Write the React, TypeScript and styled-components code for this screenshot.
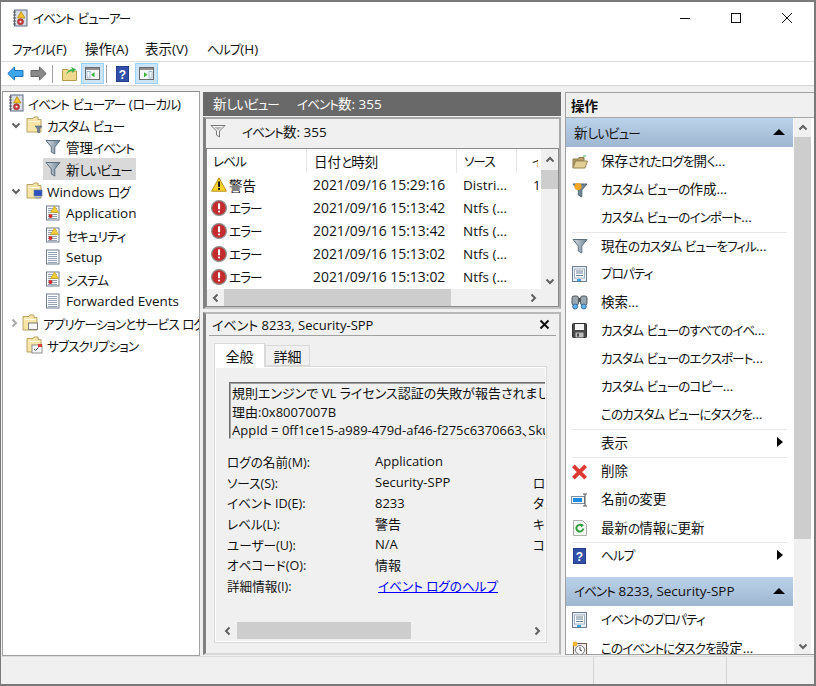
import React from "react";
import styled, { createGlobalStyle } from "styled-components";

const FONT = `"Open Sans", "Noto Sans CJK JP", sans-serif`;

const Global = createGlobalStyle`
  html, body { margin: 0; padding: 0; background: #fff; }
  * { box-sizing: border-box; }
  #root { width: 816px; height: 686px; overflow: hidden; }
`;

const Win = styled.div`
  width: 816px; height: 686px; display: flex; flex-direction: column;
  border: 2px solid #7a7a7a; border-width: 2px 2px 2px 1px;
  background: #fff; font-family: ${FONT}; font-size: 13.5px; color: #111; overflow: hidden;
  font-feature-settings: "palt";
`;
const Kana = styled.span`
  font-size: 12.6px; letter-spacing: -0.95px;
`;
const TitleBar = styled.div`
  height: 34px; display: flex; align-items: center; padding: 0 0 2px 11px; gap: 5px; flex: none;
`;
const TitleText = styled.span` font-size: 14px; flex: 1; white-space: nowrap; margin-top: -2px; `;
const WinBtn = styled.div`
  width: 46px; height: 32px; display: flex; align-items: center; justify-content: center;
  &:last-child { margin-right: 4px; }
`;
const MenuBar = styled.div`
  height: 25px; display: flex; align-items: center; padding: 0 0 1px 11px; flex: none; font-size: 13.5px;
`;
const MenuItem = styled.span<{ $w: number }>`
  width: ${p => p.$w}px; flex: none; white-space: nowrap;
`;
const Toolbar = styled.div`
  height: 24px; flex: none; border-top: 1px solid #dcdcdc; display: flex; align-items: center; padding-left: 6px;
`;
const ToolBtn = styled.div<{ $w?: number; $on?: boolean }>`
  width: ${p => p.$w ?? 23}px; height: 21px; display: flex; align-items: center; justify-content: center;
  background: ${p => (p.$on ? "#cce4f7" : "transparent")};
  border: 1px solid ${p => (p.$on ? "#99d1ff" : "transparent")};
`;
const ToolSep = styled.div<{ $mx: number }>`
  width: 1px; height: 18px; background: #a0a0a0; margin: 0 ${p => p.$mx}px;
`;
const Body = styled.div`
  flex: 1; min-height: 0; display: flex; background: #f0f0f0; border-top: 1px solid #d4d4d4; padding-top: 5px;
`;
const TreePane = styled.div`
  width: 198px; flex: none; background: #fff; border: 1px solid #a0a0a0; margin-left: 1px;
  border-top-color: #8f8f8f; overflow: hidden; white-space: nowrap;
`;
const TreeRow = styled.div<{ $lvl: number }>`
  height: 22px; display: flex; align-items: center;
  padding-left: ${p => [5, 23, 42][p.$lvl]}px;
  font-size: 13.5px;
`;
const Chevron = styled.span`
  width: 14px; margin-left: -17px; margin-right: 3px; display: flex; justify-content: center;
`;
const TreeLabel = styled.span<{ $sel?: boolean; $gap?: number }>`
  display: flex; align-items: center; height: 22px; gap: ${p => p.$gap ?? 5}px;
  background: ${p => (p.$sel ? "#d9d9d9" : "transparent")};
  padding: 0 ${p => (p.$sel ? 4 : 0)}px 0 ${p => (p.$sel ? 2 : 0)}px;
  margin-left: ${p => (p.$sel ? -2 : 0)}px;
`;
const LabelText = styled.span` white-space: nowrap; `;
const Center = styled.div`
  width: 358px; flex: none; margin-left: 3px; display: flex; flex-direction: column; padding-top: 1px;
`;
const DarkHead = styled.div`
  height: 24px; flex: none; background: #696969; color: #fff; display: flex; align-items: center;
  padding: 0 0 2px 10px; font-size: 13.5px;
`;
const DarkTitle = styled.span` width: 84px; flex: none; white-space: nowrap; `;
const ListPanel = styled.div`
  height: 192px; flex: none; margin-top: 1px; border-style: solid; border-width: 2px 2px 2px 3px;
  border-color: #a8a8a8 #a8a8a8 #c4c4c4 #808080;
  display: flex; flex-direction: column; background: #f0f0f0;
`;
const InfoBar = styled.div`
  height: 29px; flex: none; display: flex; align-items: center; padding: 0 0 5px 4px; gap: 16px; font-size: 13.5px;
`;
const ListBox = styled.div`
  flex: 1; min-height: 0; background: #fff; border: 1px solid #8a8a8a;
  display: grid; grid-template-columns: 1fr 17px; grid-template-rows: 1fr 17px;
`;
const ListMain = styled.div` overflow: hidden; min-width: 0; `;
const Head = styled.div`
  height: 24px; display: flex; white-space: nowrap;
`;
const HeadCell = styled.div<{ $w: number; $pad?: number }>`
  width: ${p => p.$w}px; flex: none; padding: 0 0 1px ${p => p.$pad ?? 6}px; display: flex; align-items: center;
  border-right: 1px solid #e5e5e5; overflow: hidden; font-size: 13.5px;
  &:last-child { border-right: 0; }
`;
const Row = styled.div`
  height: 23px; display: flex; align-items: center; white-space: nowrap; font-size: 13.5px;
`;
const Cell = styled.div<{ $w: number; $pad?: number; $fs?: number }>`
  width: ${p => p.$w}px; flex: none; padding-left: ${p => p.$pad ?? 7}px; display: flex; align-items: center; gap: 2px; overflow: hidden;
  font-size: ${p => p.$fs ?? 13.5}px;
`;
const VBar = styled.div`
  width: 17px; background: #f0f0f0; display: flex; flex-direction: column; align-items: stretch; flex: none;
`;
const HBar = styled.div`
  height: 17px; background: #f0f0f0; display: flex; align-items: stretch;
`;
const ArrowBox = styled.div<{ $s?: number; $h?: number }>`
  flex: none; width: ${p => p.$s ?? 17}px; height: ${p => (p.$h ? `${p.$h}px` : "auto")}; min-height: 17px; display: flex; align-items: center; justify-content: center;
`;
const VThumb = styled.div<{ $h: number }>`
  height: ${p => p.$h}px; background: #cdcdcd; flex: none;
`;
const HThumb = styled.div<{ $w: number }>`
  width: ${p => p.$w}px; background: #cdcdcd; flex: none;
`;
const Spacer = styled.div` flex: 1; `;
const Corner = styled.div` background: #f0f0f0; `;
const DetailPanel = styled.div`
  flex: 1; min-height: 0; margin-top: 3px; border-style: solid; border-width: 2px 2px 2px 3px; padding: 0 3px;
  display: flex; flex-direction: column; border-color: #b8b8b8 #b8b8b8 #d8d8d8 #808080; overflow: hidden; margin-bottom: 1px;
`;
const DetailHead = styled.div`
  height: 22px; flex: none; display: flex; align-items: center; border-bottom: 1px solid #a0a0a0; font-size: 13px; justify-content: space-between; padding: 0 6px 0 3px;
`;
const Tabs = styled.div`
  flex: none; height: 30px; padding: 7px 0 0 5px; display: flex; align-items: flex-end;
`;
const Tab = styled.div<{ $on?: boolean }>`
  width: ${p => (p.$on ? 51 : 45)}px; height: ${p => (p.$on ? 24 : 21)}px; display: flex; align-items: center; justify-content: center;
  background: ${p => (p.$on ? "#fff" : "#f0f0f0")}; font-size: 14px;
  border: 1px solid #d9d9d9; ${p => (p.$on ? "border-bottom:0;" : "")}
  margin-bottom: ${p => (p.$on ? -1 : 0)}px; position: relative; z-index: 1;
`;
const TabBody = styled.div`
  width: 333px; height: 277px; flex: none; margin-left: 5px; background: #f0f0f0;
  border: 1px solid #d9d9d9; box-shadow: inset 0 0 0 1px #fff; padding: 15px 1px 3px 14px; display: flex; flex-direction: column;
`;
const MsgBox = styled.div`
  height: 57px; flex: none; border: 1px solid #fff; border-top-color: #6e6e6e; border-left-color: #6e6e6e; border-bottom-color: #e3e3e3; border-right: 0;
  box-shadow: inset 1px 1px 0 #a0a0a0; padding: 1px 0 0 2px; font-size: 13px; line-height: 18.5px; white-space: nowrap; overflow: hidden;
`;
const Fields = styled.div`
  flex: 1; min-height: 0; padding-top: 12px; margin-left: -2px; overflow: hidden; font-size: 12.6px;
`;
const Field = styled.div`
  height: 20.7px; display: flex; align-items: center; white-space: nowrap;
`;
const FLabel = styled.span` width: 148px; flex: none; `;
const FValue = styled.span` width: 158px; flex: none; font-size: 13px; `;
const FThird = styled.span` flex: none; width: 13px; overflow: hidden; `;
const HelpLink = styled.a`
  color: #0000ff; text-decoration: underline; margin-left: 3px;
`;
const DetailH = styled(HBar)` margin: 0 0 0 -11px; flex: none; width: 327px; `;
const Right = styled.div`
  width: 249px; flex: none; margin-left: 4px; border: 1px solid #a0a0a0; border-width: 1px 0 1px 1px; display: flex; flex-direction: column;
  background: #fff; margin-top: 1px; margin-bottom: 1px; overflow: hidden;
`;
const ActionsHead = styled.div`
  height: 25px; flex: none; background: #f0f0f0; border-bottom: 1px solid #a8a8a8; display: flex; align-items: center; padding: 0 0 1px 5px; font-weight: 700; font-size: 13.5px;
`;
const ActionsWrap = styled.div` flex: 1; min-height: 0; display: flex; gap: 1px; `;
const ActionList = styled.div` width: 227px; flex: none; overflow: hidden; `;
const SectionHead = styled.div<{ $gapTop?: boolean }>`
  height: 29px; display: flex; align-items: center; justify-content: space-between; padding: 0 8px 1px 8px;
  margin-top: ${p => (p.$gapTop ? 7 : 0)}px;
  background: linear-gradient(#bbd2ea, #9fb6d1); font-size: 13.5px; white-space: nowrap;
`;
const ActionRow = styled.div<{ $sep?: boolean }>`
  height: 28.2px; display: flex; align-items: center; position: relative; white-space: nowrap; font-size: 13.5px; padding: 0 0 2px 35px;
  ${p => p.$sep ? `&::before { content: ""; position: absolute; left: 6px; right: 6px; top: 0; height: 1px; background: #e8e8e8; }` : ""}
`;
const ActionIcon = styled.span`
  position: absolute; left: 5px; top: 6px; width: 17px; height: 17px; display: flex; align-items: center; justify-content: center;
`;
const SubArrow = styled.span`
  position: absolute; right: 10px; top: 8px; width: 0; height: 0; border-left: 6px solid #000; border-top: 5.5px solid transparent; border-bottom: 5.5px solid transparent;
`;
const Tri = styled.span`
  width: 0; height: 0; border-bottom: 6px solid #000; border-left: 6px solid transparent; border-right: 6px solid transparent;
`;
const StatusBar = styled.div`
  height: 28px; flex: none; background: #f0f0f0; border-top: 1px solid #dcdcdc; display: flex;
`;
const StatusCell = styled.div<{ $w: number }>`
  width: ${p => p.$w}px; flex: none; border-right: 1px solid #d4d4d4;
`;

/* Splits a label so that its kana runs get the narrow setting the UI font of the reference has. */
const T = ({ children }: { children: string }) => (
  <LabelText>
    {children.split(/([\u3040-\u30ff]+)/).map((part, i) =>
      i % 2 ? <Kana key={i}>{part}</Kana> : part
    )}
  </LabelText>
);

const Chev = ({ d, c = "#606060" }: { d: "u" | "d" | "l" | "r"; c?: string }) => {
  const p = { u: "M1.5 6.5 L5 3 L8.5 6.5", d: "M1.5 3.5 L5 7 L8.5 3.5", l: "M6.5 1.5 L3 5 L6.5 8.5", r: "M3.5 1.5 L7 5 L3.5 8.5" }[d];
  return <svg width="10" height="10" viewBox="0 0 10 10"><path d={p} fill="none" stroke={c} strokeWidth="2" /></svg>;
};
const Filter = ({ s = 16 }: { s?: number }) => (
  <svg width={s} height={s} viewBox="0 0 16 16">
    <defs><linearGradient id="fg" x1="0" y1="0" x2="1" y2="0"><stop offset="0" stopColor="#d5dee5" /><stop offset="1" stopColor="#6f8494" /></linearGradient></defs>
    <path d="M1 1.5 H15 L9.8 8 V15 L6.3 13 V8 Z" fill="url(#fg)" stroke="#5b7080" strokeWidth="1" />
  </svg>
);
const FilterOutline = () => (
  <svg width="16" height="14" viewBox="0 0 16 14"><path d="M1 1.5 H15 L9.5 7 V13 L6.5 11 V7 Z" fill="#f4f4f4" stroke="#777" /><path d="M4 3 H12 L8 6.5Z" fill="#bbb" /></svg>
);
const FilterOrange = () => (
  <svg width="16" height="16" viewBox="0 0 16 16"><path d="M1 2 H15 L9.8 8 V15 L6.3 13 V8 Z" fill="#6f8494" stroke="#4f6474" /><circle cx="6" cy="4.5" r="3.6" fill="#f5a623" /></svg>
);
const BookIcon = () => (
  <svg width="16" height="18" viewBox="0 0 16 18">
    <rect x="2.5" y="1" width="12.5" height="16" fill="#d8dde6" stroke="#5f6c80" />
    <path d="M1 3h3M1 6h3M1 9h3M1 12h3M1 15h3" stroke="#555" strokeWidth="1.2" />
    <path d="M9 2.5 L13 9 H5.5 Z" fill="#f2c230" stroke="#a67c00" strokeWidth=".6" />
    <circle cx="8.5" cy="12.8" r="3" fill="#cf3b3b" stroke="#8c2020" strokeWidth=".6" /><circle cx="8.5" cy="12.8" r="1" fill="#fff" />
  </svg>
);
const Folder = ({ children }: { children?: React.ReactNode }) => (
  <svg width="17" height="18" viewBox="0 0 17 18">
    <path d="M1 2.5 H7 L8 1 H12 V3.5 H15 V16 H1 Z" fill="#f6e6a8" stroke="#b8a365" />
    <rect x="2.5" y="5" width="11" height="1" fill="#fff" opacity=".7" />
    {children}
  </svg>
);
const LogIcon = ({ warn }: { warn?: boolean }) => (
  <svg width="15" height="16" viewBox="0 0 15 16">
    <rect x="1.5" y="1" width="12.5" height="14" fill="#fbfcfd" stroke="#6f7d8f" />
    <path d="M3 3.5h9M3 5.5h9M3 7.5h9M3 9.5h9M3 11.5h9M3 13.5h9" stroke="#93a1b3" />
    {warn && <><path d="M9.5 1 L13.5 7.5 H5.5 Z" fill="#f5cf3a" stroke="#b58f00" strokeWidth=".5" /><circle cx="5.5" cy="11" r="2" fill="#d02c2c" /></>}
  </svg>
);
const Warn = () => (
  <svg width="16" height="15" viewBox="0 0 16 15"><path d="M8 .8 L15.4 14.2 H.6 Z" fill="#f7d330" stroke="#b78f10" strokeLinejoin="round" /><rect x="7.1" y="4.5" width="1.9" height="5.5" fill="#111" /><rect x="7.1" y="11" width="1.9" height="1.9" fill="#111" /></svg>
);
const Err = () => (
  <svg width="16" height="16" viewBox="0 0 16 16"><circle cx="8" cy="8" r="7.4" fill="#c42b2f" stroke="#8f8f8f" strokeWidth="1.2" /><rect x="7" y="3.3" width="2.1" height="6" rx=".6" fill="#fff" /><rect x="7" y="10.4" width="2.1" height="2.1" rx=".9" fill="#fff" /></svg>
);
const PropIcon = () => (
  <svg width="15" height="16" viewBox="0 0 15 16"><rect x=".5" y=".5" width="14" height="15" fill="#e8eef5" stroke="#6f7d8f" /><rect x="2.5" y="3" width="10" height="9" fill="#fff" stroke="#a3afbd" /><path d="M4 5h7M4 7h7M4 9.5h7" stroke="#6b7f95" /><rect x="5" y="13" width="4" height="2" fill="#3ba3ee" /></svg>
);
const PaneIcon = ({ right }: { right?: boolean }) => (
  <svg width="15" height="13" viewBox="0 0 15 13">
    <rect x=".5" y=".5" width="14" height="12" fill="#f4f6f8" stroke="#6a6a6a" /><rect x="1" y="1" width="13" height="2" fill="#8f8f8f" />
    <rect x={right ? 10 : 2} y="4.5" width="3" height="6.5" fill="#fff" stroke="#7fa3c6" strokeWidth=".7" />
    <path d={right ? "M5 5.2 L8.5 7.7 L5 10.2Z" : "M9.5 5.2 L6 7.7 L9.5 10.2Z"} fill="#35b335" />
  </svg>
);
const Help = ({ w = 13 }: { w?: number }) => (
  <svg width={w} height={w + 3} viewBox="0 0 13 16"><rect width="13" height="16" fill="#2f4fa8" /><rect width="13" height="16" fill="none" stroke="#1b2f73" /><text x="6.5" y="12.5" fontSize="12" fontWeight="700" fontFamily="Liberation Sans, sans-serif" textAnchor="middle" fill="#fff">?</text></svg>
);
const ArrowIcon = ({ left, c1, c2 }: { left?: boolean; c1: string; c2: string }) => (
  <svg width="17" height="15" viewBox="0 0 17 15">
    <path d={left ? "M.8 7.5 L7.5 1 V4.5 H16 V10.5 H7.5 V14 Z" : "M16.2 7.5 L9.5 1 V4.5 H1 V10.5 H9.5 V14 Z"} fill={c1} stroke={c2} strokeLinejoin="round" />
  </svg>
);
const X = () => (
  <svg width="18" height="18" viewBox="0 0 18 18"><path d="M2.5 2.5 L15.5 15.5 M15.5 2.5 L2.5 15.5" stroke="#dc3a30" strokeWidth="4" /></svg>
);

const rows: [boolean, string, string][] = [
  [true, "2021/09/16 15:29:16", "Distri..."],
  [false, "2021/09/16 15:13:42", "Ntfs (..."],
  [false, "2021/09/16 15:13:42", "Ntfs (..."],
  [false, "2021/09/16 15:13:02", "Ntfs (..."],
  [false, "2021/09/16 15:13:02", "Ntfs (..."],
];

const fields: [string, string, string][] = [
  ["ログの名前(M):", "Application", ""],
  ["ソース(S):", "Security-SPP", "ログ"],
  ["イベント ID(E):", "8233", "タスク"],
  ["レベル(L):", "警告", "キーワード"],
  ["ユーザー(U):", "N/A", "コンピューター"],
  ["オペコード(O):", "情報", ""],
];

const actions1: { t: string; i?: React.ReactNode; sep?: boolean; sub?: boolean }[] = [
  { t: "保存されたログを開く...", i: <svg width="16" height="14" viewBox="0 0 16 14"><path d="M1 4 H6 L7 2.5 H12 V6 H3.5 L1 12.5 Z" fill="#b8a06a" stroke="#8a7748" /><path d="M1 13 L3.6 6 H15.5 L13 13 Z" fill="#e2cf96" stroke="#9a8650" /><path d="M11 1h3" stroke="#3db54a" /></svg> },
  { t: "カスタム ビューの作成...", i: <FilterOrange /> },
  { t: "カスタム ビューのインポート..." },
  { t: "現在のカスタム ビューをフィル...", i: <Filter />, sep: true },
  { t: "プロパティ", i: <PropIcon /> },
  { t: "検索...", i: <svg width="17" height="16" viewBox="0 0 17 16"><rect x="1" y="2" width="6.5" height="9" rx="2" fill="#9aa5ad" stroke="#4f5860" /><rect x="9.5" y="2" width="6.5" height="9" rx="2" fill="#9aa5ad" stroke="#4f5860" /><rect x="7" y="4" width="3" height="4" fill="#4f5860" /><circle cx="4.2" cy="12.5" r="2.5" fill="#5fb2ec" stroke="#3b6d94" /><circle cx="12.8" cy="12.5" r="2.5" fill="#5fb2ec" stroke="#3b6d94" /></svg> },
  { t: "カスタム ビューのすべてのイベ...", i: <svg width="15" height="15" viewBox="0 0 15 15"><rect x=".5" y=".5" width="14" height="14" rx="1" fill="#4a4a4a" stroke="#2f2f2f" /><rect x="3" y="1" width="9" height="6" fill="#f4f4f4" /><rect x="3.5" y="9.5" width="8" height="5" fill="#bdbdbd" /><rect x="5" y="10.5" width="2" height="3" fill="#4a4a4a" /></svg> },
  { t: "カスタム ビューのエクスポート..." },
  { t: "カスタム ビューのコピー..." },
  { t: "このカスタム ビューにタスクを..." },
  { t: "表示", sep: true, sub: true },
  { t: "削除", i: <X />, sep: true },
  { t: "名前の変更", i: <svg width="17" height="14" viewBox="0 0 17 14"><rect x=".5" y="3.5" width="13" height="7" fill="#f5f8fb" stroke="#7b8ca0" /><rect x="2" y="5" width="9" height="4" fill="#1e88e5" /><path d="M12 1h4M14 1v12M12 13h4" stroke="#555" fill="none" /></svg> },
  { t: "最新の情報に更新", i: <svg width="14" height="16" viewBox="0 0 14 16"><path d="M.5.5 H9.5 L13.5 4.5 V15.5 H.5 Z" fill="#f6f8f6" stroke="#a8b0a8" /><path d="M10.2 8.5 A3.4 3.4 0 1 1 9 5.6" fill="none" stroke="#2f9f3a" strokeWidth="2" /><path d="M7.5 3.6 L11 5 L8.2 7.4Z" fill="#2f9f3a" /></svg> },
  { t: "ヘルプ", i: <Help />, sep: true, sub: true },
];

export default function App() {
  return (
    <Win>
      <Global />
      <TitleBar>
        <BookIcon />
        <TitleText><T>イベント ビューアー</T></TitleText>
        <WinBtn><svg width="12" height="12" viewBox="0 0 12 12"><path d="M1 6.5H11" stroke="#111" /></svg></WinBtn>
        <WinBtn><svg width="12" height="12" viewBox="0 0 12 12"><rect x="1.5" y="1.5" width="9" height="9" fill="none" stroke="#111" /></svg></WinBtn>
        <WinBtn><svg width="12" height="12" viewBox="0 0 12 12"><path d="M1 1L11 11M11 1L1 11" stroke="#111" /></svg></WinBtn>
      </TitleBar>
      <MenuBar>
        <MenuItem $w={73}><T>ファイル(F)</T></MenuItem><MenuItem $w={60}><T>操作(A)</T></MenuItem><MenuItem $w={62}><T>表示(V)</T></MenuItem><MenuItem $w={60}><T>ヘルプ(H)</T></MenuItem>
      </MenuBar>
      <Toolbar>
        <ArrowIcon left c1="#3aa7f0" c2="#1c74bd" />
        <ToolBtn $w={6} />
        <ArrowIcon c1="#8a8a8a" c2="#666" />
        <ToolSep $mx={5} />
        <ToolBtn $w={23}><svg width="15" height="15" viewBox="0 0 15 15"><path d="M.5 3.5H6L7 5H14.5V14.5H.5Z" fill="#eed98e" stroke="#b29a4e" /><path d="M4 9 Q6 3 10 3 L9 .8 L14 3.5 L10 7 V5 Q7 5 4 9Z" fill="#3db54a" /></svg></ToolBtn>
        <ToolBtn $on><PaneIcon /></ToolBtn>
        <ToolSep $mx={2} />
        <ToolBtn $w={26}><Help /></ToolBtn>
        <ToolBtn $on><PaneIcon right /></ToolBtn>
      </Toolbar>
      <Body>
        <TreePane>
          <TreeRow $lvl={0}><TreeLabel $gap={4}><BookIcon /><T>イベント ビューアー (ローカル)</T></TreeLabel></TreeRow>
          <TreeRow $lvl={1}><Chevron><Chev d="d" /></Chevron><TreeLabel $gap={4}><Folder><path d="M9 10H16L13.5 13V17L11.5 16V13Z" fill="#6f8494" stroke="#4d6070" strokeWidth=".6" /></Folder><T>カスタム ビュー</T></TreeLabel></TreeRow>
          <TreeRow $lvl={2}><TreeLabel><Filter /><T>管理イベント</T></TreeLabel></TreeRow>
          <TreeRow $lvl={2}><TreeLabel $sel><Filter /><T>新しいビュー</T></TreeLabel></TreeRow>
          <TreeRow $lvl={1}><Chevron><Chev d="d" /></Chevron><TreeLabel $gap={4}><Folder><rect x="8" y="8" width="8" height="6" fill="#2b4fc0" stroke="#6a7a92" strokeWidth=".7" /><rect x="9" y="15" width="6" height="1.5" fill="#9aa5b2" /></Folder><T>Windows ログ</T></TreeLabel></TreeRow>
          <TreeRow $lvl={2}><TreeLabel $gap={6}><LogIcon warn /><T>Application</T></TreeLabel></TreeRow>
          <TreeRow $lvl={2}><TreeLabel $gap={6}><LogIcon warn /><T>セキュリティ</T></TreeLabel></TreeRow>
          <TreeRow $lvl={2}><TreeLabel $gap={6}><LogIcon /><T>Setup</T></TreeLabel></TreeRow>
          <TreeRow $lvl={2}><TreeLabel $gap={6}><LogIcon warn /><T>システム</T></TreeLabel></TreeRow>
          <TreeRow $lvl={2}><TreeLabel $gap={6}><LogIcon /><T>Forwarded Events</T></TreeLabel></TreeRow>
          <TreeRow $lvl={1}><Chevron><Chev d="r" c="#aaa" /></Chevron><TreeLabel $gap={4}><Folder><rect x="6.5" y="9" width="9" height="6.5" fill="#f7f7f7" stroke="#7d7d7d" /></Folder><T>アプリケーションとサービス ログ</T></TreeLabel></TreeRow>
          <TreeRow $lvl={1}><Chevron /><TreeLabel $gap={4}><Folder><rect x="6" y="9" width="10" height="8" fill="#fff" stroke="#8a8a8a" /><rect x="12" y="8" width="4" height="3" fill="#d8413b" /><path d="M8 13l1.5 1.5 3-3" stroke="#4a4a4a" fill="none" /></Folder><T>サブスクリプション</T></TreeLabel></TreeRow>
        </TreePane>
        <Center>
          <DarkHead><DarkTitle><T>新しいビュー</T></DarkTitle><T>イベント数: 355</T></DarkHead>
          <ListPanel>
            <InfoBar><FilterOutline /><T>イベント数: 355</T></InfoBar>
            <ListBox>
              <ListMain>
                <Head>
                  <HeadCell $w={100}><T>レベル</T></HeadCell>
                  <HeadCell $w={150} $pad={7}><T>日付と時刻</T></HeadCell>
                  <HeadCell $w={60} $pad={7}><T>ソース</T></HeadCell>
                  <HeadCell $w={21} $pad={15}><T>イベント ID</T></HeadCell>
                </Head>
                {rows.map((r, i) => (
                  <Row key={i}>
                    <Cell $w={106} $pad={4}>{r[0] ? <Warn /> : <Err />}<T>{r[0] ? "警告" : "エラー"}</T></Cell>
                    <Cell $w={150} $pad={0} $fs={13.9}>{r[1]}</Cell>
                    <Cell $w={54} $pad={0}>{r[2]}</Cell>
                    <Cell $w={21} $pad={16}>{r[0] ? "1" : ""}</Cell>
                  </Row>
                ))}
              </ListMain>
              <VBar>
                <ArrowBox $h={21}><Chev d="u" /></ArrowBox>
                <VThumb $h={19} />
                <Spacer />
                <ArrowBox $h={17}><Chev d="d" /></ArrowBox>
              </VBar>
              <HBar>
                <ArrowBox><Chev d="l" /></ArrowBox>
                <HThumb $w={227} />
                <Spacer />
                <ArrowBox><Chev d="r" /></ArrowBox>
              </HBar>
              <Corner />
            </ListBox>
          </ListPanel>
          <DetailPanel>
            <DetailHead><span>イベント 8233, Security-SPP</span><svg width="11" height="11" viewBox="0 0 11 11"><path d="M1.5 1.5L9.5 9.5M9.5 1.5L1.5 9.5" stroke="#111" strokeWidth="2" /></svg></DetailHead>
            <Tabs><Tab $on>全般</Tab><Tab>詳細</Tab></Tabs>
            <TabBody>
              <MsgBox>
                規則エンジンで VL ライセンス認証の失敗が報告されました。<br />
                理由:0x8007007B<br />
                AppId = 0ff1ce15-a989-479d-af46-f275c6370663、Skuld
              </MsgBox>
              <Fields>
                {fields.map(f => (
                  <Field key={f[0]}><FLabel>{f[0]}</FLabel><FValue>{f[1]}</FValue><FThird>{f[2]}</FThird></Field>
                ))}
                <Field><FLabel>詳細情報(I):</FLabel><HelpLink>イベント ログのヘルプ</HelpLink></Field>
              </Fields>
              <DetailH>
                <ArrowBox $s={19}><Chev d="l" /></ArrowBox>
                <HThumb $w={174} />
                <Spacer />
                <ArrowBox><Chev d="r" /></ArrowBox>
              </DetailH>
            </TabBody>
          </DetailPanel>
        </Center>
        <Right>
          <ActionsHead>操作</ActionsHead>
          <ActionsWrap>
            <ActionList>
              <SectionHead><T>新しいビュー</T><Tri /></SectionHead>
              {actions1.map(a => (
                <ActionRow key={a.t} $sep={a.sep}>
                  {a.i && <ActionIcon>{a.i}</ActionIcon>}
                  <T>{a.t}</T>
                  {a.sub && <SubArrow />}
                </ActionRow>
              ))}
              <SectionHead $gapTop><T>イベント 8233, Security-SPP</T><Tri /></SectionHead>
              <ActionRow><ActionIcon><PropIcon /></ActionIcon><T>イベントのプロパティ</T></ActionRow>
              <ActionRow><ActionIcon><svg width="16" height="16" viewBox="0 0 16 16"><rect x="1.5" y="2.5" width="13" height="13" fill="#eee" stroke="#6d5a4a" /><circle cx="8" cy="9" r="4.5" fill="#fff" stroke="#777" /><path d="M8 6v3l2 1" stroke="#444" fill="none" /><circle cx="3" cy="3" r="2.4" fill="#f5b533" /></svg></ActionIcon><T>このイベントにタスクを設定...</T></ActionRow>
            </ActionList>
            <VBar>
              <ArrowBox $h={19}><Chev d="u" /></ArrowBox>
              <VThumb $h={402} />
              <Spacer />
              <ArrowBox $h={17}><Chev d="d" /></ArrowBox>
            </VBar>
          </ActionsWrap>
        </Right>
      </Body>
      <StatusBar>
        <StatusCell $w={593} />
        <StatusCell $w={133} />
      </StatusBar>
    </Win>
  );
}
